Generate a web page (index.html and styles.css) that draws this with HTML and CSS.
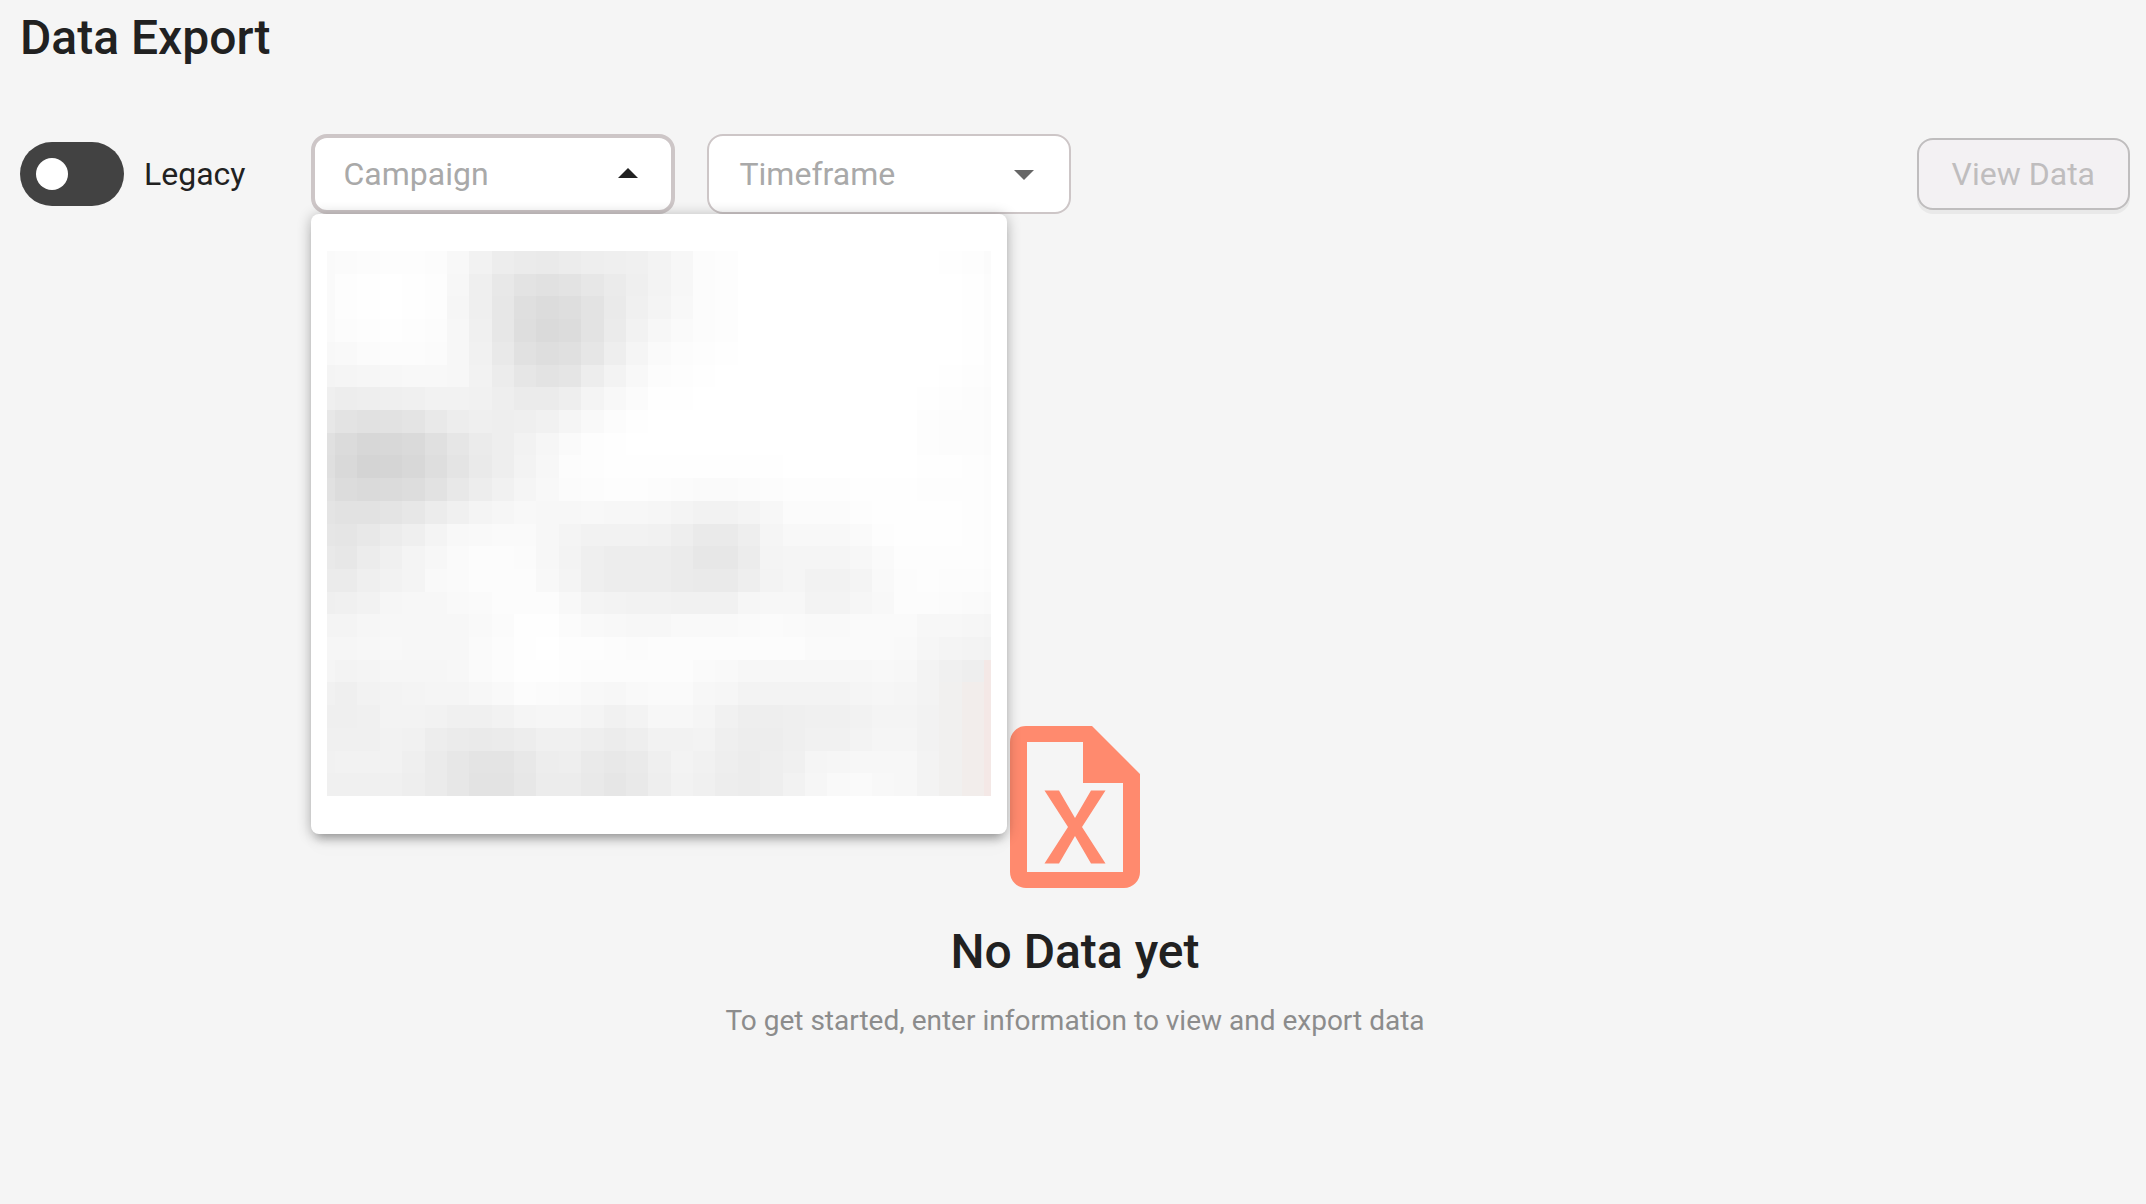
FILE: index.html
```html
<!DOCTYPE html>
<html lang="en">
<head>
    <meta charset="UTF-8">
    <meta name="viewport" content="width=device-width, initial-scale=1.0">
    <title>Data Export</title>
    <link rel="stylesheet" href="styles.css">
</head>
<body>
    <header>
        <h1>Data Export</h1>
    </header>

    <main>
        <!-- Filters -->
        <div class="toolbar">
            <label class="switch-label">
                <input type="checkbox" class="switch" role="switch">
                Legacy
            </label>

            <div class="filters">
                <div class="field field-open">
                    <select aria-label="Campaign">
                        <option>Campaign</option>
                    </select>
                    <svg class="arrow" viewBox="0 0 20 10" aria-hidden="true"><path d="M0 10L10 0l10 10z"/></svg>
                    <div class="menu">
                        <svg class="preview" id="preview" viewBox="0 0 664 545" preserveAspectRatio="none" aria-hidden="true"></svg>
                    </div>
                </div>

                <div class="field">
                    <select aria-label="Timeframe">
                        <option>Timeframe</option>
                    </select>
                    <svg class="arrow" viewBox="0 0 20 10" aria-hidden="true"><path d="M0 0l10 10L20 0z"/></svg>
                </div>
            </div>

            <button type="button" class="view-button" disabled>View Data</button>
        </div>

        <!-- Empty state -->
        <section class="empty">
            <svg class="file-icon" viewBox="0 0 130 162" aria-hidden="true">
                <path fill-rule="evenodd" d="M16 0H82L130 48V146a16 16 0 0 1-16 16H16a16 16 0 0 1-16-16V16A16 16 0 0 1 16 0zM17 16V146H113V57H73V16z"/>
                <path d="M34.500 64.500H49L65 92 81 64.500H95.500L72 101 95.500 137.500H81L65 110 49 137.500H34.500L58 101z"/>
            </svg>
            <h2>No Data yet</h2>
            <p>To get started, enter information to view and export data</p>
        </section>
    </main>

    <script src="script.js"></script>
</body>
</html>
```

FILE: styles.css
```css
/* General Styling */
* {
    margin: 0;
    padding: 0;
    box-sizing: border-box;
    font-family: Roboto, sans-serif;
}

body {
    background-color: #f5f5f5;
    color: #212121;
    padding: 0 16px 0 20px;
}

h1, h2 {
    font-size: 48px;
    line-height: 56px;
    font-weight: 500;
}

header {
    padding-top: 10px;
    margin-bottom: 68px;
}

/* Toolbar */
.toolbar {
    display: flex;
    align-items: center;
}

.switch-label {
    display: flex;
    align-items: center;
    gap: 20px;
    margin-right: 66px;
    font-size: 32px;
    line-height: 40px;
}

.switch {
    appearance: none;
    display: flex;
    align-items: center;
    width: 104px;
    height: 64px;
    padding: 0 16px;
    border-radius: 32px;
    background-color: #424242;
    cursor: pointer;
}

.switch::before {
    content: "";
    width: 32px;
    height: 32px;
    border-radius: 50%;
    background-color: white;
}

.switch:checked {
    justify-content: flex-end;
}

.filters {
    display: flex;
    gap: 32px;
}

.field {
    position: relative;
    width: 364px;
}

.field select {
    appearance: none;
    display: block;
    width: 100%;
    height: 80px;
    padding: 0 72px 0 30px;
    border: 2px solid #cdc6c7;
    border-radius: 16px;
    background-color: white;
    color: #a9a9a9;
    font-size: 32px;
    outline: none;
}

.field-open select {
    padding: 0 70px 0 28px;
    border-width: 4px;
}

.arrow {
    position: absolute;
    top: 36px;
    right: 37px;
    width: 20px;
    height: 10px;
    fill: #666;
    pointer-events: none;
}

.field-open .arrow {
    top: 34px;
    fill: #212121;
}

/* Campaign menu */
.menu {
    position: absolute;
    top: 100%;
    left: 0;
    z-index: 1;
    width: 696px;
    padding: 37px 16px 38px;
    border-radius: 8px;
    background-color: white;
    box-shadow: 0 10px 10px -6px rgba(0, 0, 0, 0.2),
                0 16px 20px 2px rgba(0, 0, 0, 0.01),
                0 2px 14px 0 rgba(0, 0, 0, 0.3);
}

.preview {
    display: block;
    width: 100%;
    height: 545px;
}

.view-button {
    height: 72px;
    margin-left: auto;
    padding: 0 33px;
    border: 2px solid #bfbdbe;
    border-radius: 16px;
    background-color: #f3f1f3;
    color: #bfbdbe;
    font-size: 32px;
    box-shadow: 0 4px 0 #e9e9e9;
}

/* Empty state */
.empty {
    display: flex;
    flex-direction: column;
    align-items: center;
    margin-top: 512px;
    text-align: center;
}

.file-icon {
    width: 130px;
    height: 162px;
    fill: #ff8a6e;
}

.empty h2 {
    margin: 36px 0 23px;
}

.empty p {
    color: #8c8c8c;
    font-size: 28px;
    line-height: 36px;
}
```

FILE: script.js
```js
// Darkness of each tile, 0 is white
const tiles = [
    "5 4 3 2 2 3 7 13 18 20 21 19 17 16 15 12 8 3 2 0 0 0 0 0 0 0 0 0 1 2 4",
    "5 2 1 0 1 2 8 16 23 28 30 28 24 20 16 12 8 3 2 0 0 0 0 0 0 0 0 0 0 1 3",
    "5 2 1 0 1 2 9 16 24 32 35 33 28 21 15 11 7 3 2 0 0 0 0 0 0 0 0 0 0 1 3",
    "5 3 2 1 2 3 8 15 24 33 37 35 28 20 13 8 5 3 2 0 0 0 0 0 0 0 0 0 0 1 3",
    "7 6 4 3 3 4 8 14 22 30 33 31 25 17 10 5 3 2 1 0 0 0 0 0 0 0 0 0 0 1 3",
    "11 10 9 8 7 7 8 13 19 25 28 26 18 12 7 3 2 1 0 0 0 0 0 0 0 0 0 0 1 2 3",
    "16 18 17 16 15 13 13 14 17 20 20 17 11 7 4 1 1 0 0 0 0 0 0 0 0 0 0 1 2 3 4",
    "24 28 30 29 27 22 18 16 17 16 14 10 6 3 1 0 0 0 0 0 0 0 0 0 0 0 0 2 3 3 4",
    "31 36 40 39 37 31 25 20 17 13 9 5 2 1 0 0 0 0 0 0 0 0 0 0 0 0 0 2 3 3 4",
    "32 38 43 42 39 33 27 21 17 12 8 3 2 1 1 1 1 1 1 1 1 0 0 0 0 0 0 1 1 2 3",
    "30 35 37 36 34 29 23 18 14 10 7 4 3 2 2 3 4 5 5 4 3 2 2 2 1 1 1 2 2 2 3",
    "27 29 29 27 24 19 15 11 9 7 8 8 7 8 8 9 11 13 13 11 8 4 4 4 2 1 1 1 1 2 3",
    "25 26 23 19 16 11 7 6 5 5 8 11 13 13 13 14 17 21 21 17 10 7 7 7 5 2 1 1 1 2 3",
    "22 24 19 15 11 8 5 3 3 4 8 12 16 18 18 18 20 24 24 19 11 10 10 10 8 5 2 2 2 2 3",
    "20 20 16 13 11 6 5 3 3 3 7 11 16 18 18 18 20 21 21 17 12 10 13 13 11 6 3 2 3 3 4",
    "16 15 13 9 8 8 6 5 3 3 3 7 11 12 13 13 14 14 14 9 8 8 12 12 9 7 3 3 4 5 6",
    "11 11 9 8 8 8 8 6 4 1 1 4 6 7 8 8 6 6 6 5 4 5 6 6 5 5 5 8 8 9 10",
    "9 9 8 7 8 8 8 5 3 1 0 2 2 3 4 3 3 3 3 3 3 3 5 5 5 5 6 9 11 12 13",
    "10 12 11 9 9 9 8 5 3 1 1 2 3 3 3 3 3 5 6 8 8 8 8 8 8 7 8 12 15 17 17",
    "14 16 13 12 11 10 10 8 6 3 4 5 7 8 6 5 5 8 9 12 12 12 12 12 10 9 10 12 14 17 17",
    "16 16 15 12 12 13 15 15 13 10 9 9 11 14 12 8 8 10 14 17 17 16 15 15 13 11 11 13 14 17 18",
    "15 15 15 13 14 18 20 21 20 18 15 15 17 19 17 13 13 12 16 18 18 16 14 14 12 10 10 13 14 17 18",
    "14 13 13 13 16 20 24 27 27 23 18 17 21 23 21 16 12 14 17 19 17 15 10 9 8 8 8 12 14 16 18",
    "15 15 15 15 17 20 24 28 28 24 19 19 22 25 22 17 13 15 18 19 17 13 9 6 5 7 8 12 14 16 18"
];

const rowHeight = 545 / tiles.length;
const colWidth = 649 / 29;
const preview = document.getElementById("preview");

// The first and last columns are cut short
function columnEdge(i) {
    if (i === 0) return 0;
    return i > 30 ? 664 : Math.round(8 + (i - 1) * colWidth);
}

function tileColor(row, col, darkness) {
    if (row > 17 && col === 30) return "#f4e8e6";
    if (row > 18 && col === 29) return "#f2edeb";
    if (row > 18 && col === 28) return "#f1f0ef";
    const level = 255 - darkness;
    return `rgb(${level}, ${level}, ${level})`;
}

tiles.forEach((line, row) => {
    const top = Math.round(row * rowHeight);
    const bottom = Math.round((row + 1) * rowHeight);

    line.split(" ").forEach((darkness, col) => {
        const rect = document.createElementNS("http://www.w3.org/2000/svg", "rect");
        rect.setAttribute("x", columnEdge(col));
        rect.setAttribute("y", top);
        rect.setAttribute("width", columnEdge(col + 1) - columnEdge(col));
        rect.setAttribute("height", bottom - top);
        rect.setAttribute("fill", tileColor(row, col, darkness));
        preview.appendChild(rect);
    });
});
```
